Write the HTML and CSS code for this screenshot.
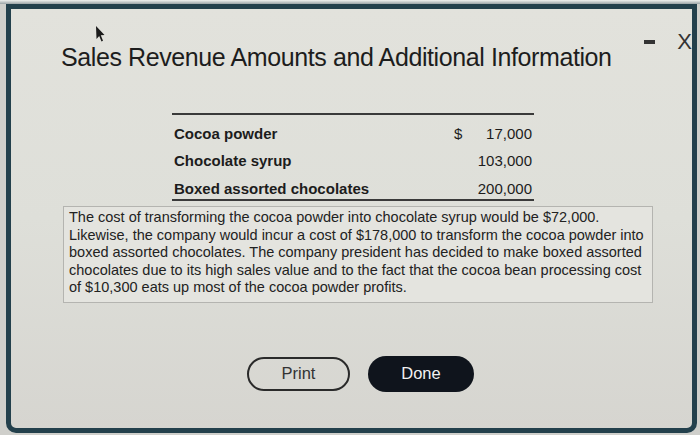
FILE: index.html
```html
<!DOCTYPE html>
<html>
<head>
<meta charset="utf-8">
<link rel="stylesheet" href="styles.css">
</head>
<body>
<div class="strip"></div>
<div class="dialog">
  <div class="head">
    <h1 class="title">Sales Revenue Amounts and Additional Information</h1>
    <div class="controls"><span class="min"></span><span class="close">X</span></div>
  </div>
  <div class="tablewrap">
    <div class="rev">
      <div class="row r1"><span class="lbl">Cocoa powder</span><span class="cur">$</span><span class="num">17,000</span></div>
      <div class="row"><span class="lbl">Chocolate syrup</span><span class="cur"></span><span class="num">103,000</span></div>
      <div class="row r3"><span class="lbl">Boxed assorted chocolates</span><span class="cur"></span><span class="num">200,000</span></div>
    </div>
  </div>
  <div class="info">The cost of transforming the cocoa powder into chocolate syrup would be $72,000. Likewise, the company would incur a cost of $178,000 to transform the cocoa powder into boxed assorted chocolates. The company president has decided to make boxed assorted chocolates due to its high sales value and to the fact that the cocoa bean processing cost of $10,300 eats up most of the cocoa powder profits.</div>
  <div class="buttons">
    <button class="btn print">Print</button>
    <button class="btn done">Done</button>
  </div>
</div>
<svg class="cursor" width="11" height="18" viewBox="0 0 11 18"><path d="M1 1 L1.5 14 L4.2 11 L6.5 16.5 L8 15.8 L5.8 10.3 L9.5 10 Z" fill="#1a1a1a"/></svg>
</body>
</html>
```
FILE: styles.css
```css
html, body { margin: 0; padding: 0; }
body {
  width: 700px; height: 435px; overflow: hidden;
  background: #cfcfcb;
  font-family: "Liberation Sans", Arial, sans-serif;
  color: #1c1c1c;
  position: relative;
}
.strip {
  height: 4px;
  background: linear-gradient(180deg, #f0f1ef 0%, #9aa3a6 100%);
}
.dialog {
  box-sizing: border-box;
  height: 429px;
  margin: 0 3px 0 6px;
  border: 5px solid #23404c;
  border-radius: 0 0 10px 10px;
  background: linear-gradient(180deg, #e2e2dc 0%, #dedfd9 50%, #d6d5d0 100%);
  display: flex; flex-direction: column;
}
.head { display: flex; align-items: flex-start; justify-content: space-between; padding: 34px 0 0 50px; }
.title { margin: 0; font-weight: normal; font-size: 25px; letter-spacing: -0.4px; color: #1d1d1d; }
.controls { display: flex; align-items: center; gap: 22px; margin-top: -14px; }
.min { display: block; width: 11px; height: 4px; background: #333; }
.close { font-size: 22px; color: #333; font-weight: normal; }
.tablewrap { padding: 41px 0 0 161px; }
.rev { width: 362px; border-top: 2px solid #3a3a3a; border-bottom: 2px solid #3a3a3a; }
.row {
  display: grid; grid-template-columns: 1fr 10px 70px;
  height: 28px; box-sizing: border-box; padding-top: 9px;
  font-size: 15px; line-height: 17px;
}
.row.r1 { padding-top: 10px; }
.lbl { font-weight: bold; padding-left: 2px; }
.num { text-align: right; padding-right: 2px; }
.info {
  margin: 5px 39px 0 52px;
  border: 1px solid #b4b4b0;
  background: #e4e4df;
  padding: 2px 6px 5px 5px;
  font-size: 14.5px; line-height: 17.5px; color: #222;
}
.buttons { display: flex; justify-content: center; gap: 18px; margin-top: 53px; padding-left: 18px; }
.btn { font-family: "Liberation Sans", Arial, sans-serif; font-size: 16.5px; height: 34px; border-radius: 17px; }
.print { width: 103px; background: transparent; border: 2px solid #2a2a2a; color: #333; margin-top: 1px; }
.done { width: 106px; background: #0f141c; border: none; color: #f2f2f2; height: 36px; border-radius: 18px; }
.cursor { position: absolute; left: 95px; top: 25px; }
```
